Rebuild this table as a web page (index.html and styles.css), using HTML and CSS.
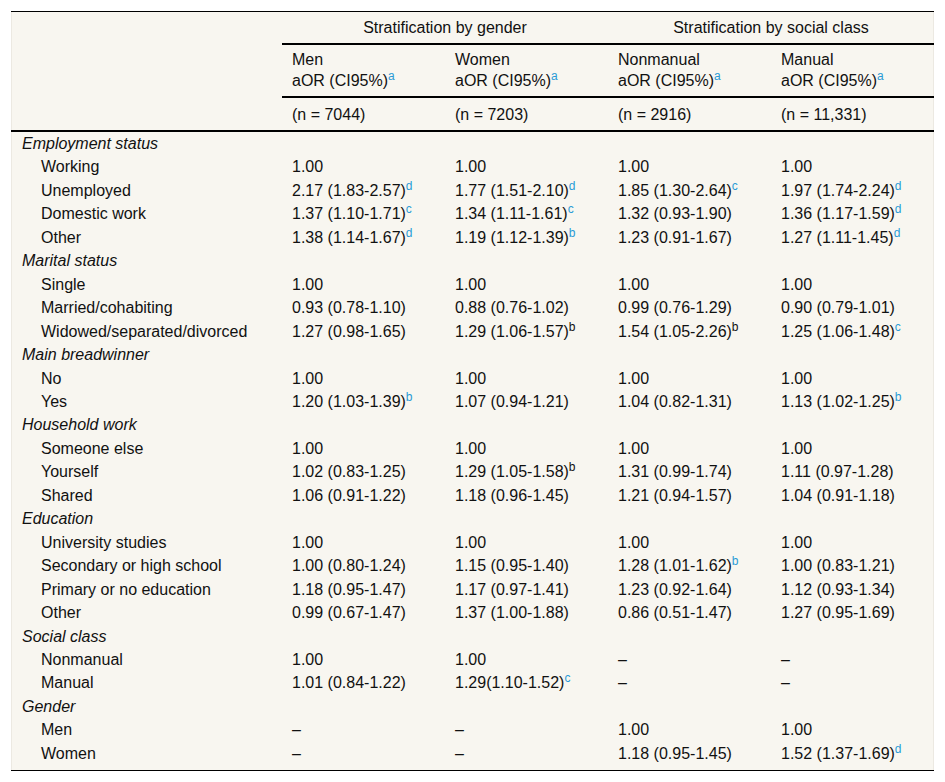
FILE: index.html
```html
<!DOCTYPE html>
<html>
<head>
<meta charset="utf-8">
<link rel="stylesheet" href="styles.css">
</head>
<body>
<div class="wrap">
<table class="tbl">
<colgroup><col class="c-label"><col class="c-data"><col class="c-data"><col class="c-data"><col class="c-data"></colgroup>
<thead>
<tr class="h1">
<th class="corner" rowspan="3"></th>
<th class="group" colspan="2">Stratification by gender</th>
<th class="group" colspan="2">Stratification by social class</th>
</tr>
<tr class="h2">
<th>Men<br>aOR (CI95%)<sup class="fn">a</sup></th>
<th>Women<br>aOR (CI95%)<sup class="fn">a</sup></th>
<th>Nonmanual<br>aOR (CI95%)<sup class="fn">a</sup></th>
<th>Manual<br>aOR (CI95%)<sup class="fn">a</sup></th>
</tr>
<tr class="h3">
<th>(n = 7044)</th>
<th>(n = 7203)</th>
<th>(n = 2916)</th>
<th>(n = 11,331)</th>
</tr>
</thead>
<tbody>
<tr><td class="cat" colspan="5">Employment status</td></tr>
<tr><td class="item">Working</td><td>1.00</td><td>1.00</td><td>1.00</td><td>1.00</td></tr>
<tr><td class="item">Unemployed</td><td>2.17 (1.83-2.57)<sup class="fn">d</sup></td><td>1.77 (1.51-2.10)<sup class="fn">d</sup></td><td>1.85 (1.30-2.64)<sup class="fn">c</sup></td><td>1.97 (1.74-2.24)<sup class="fn">d</sup></td></tr>
<tr><td class="item">Domestic work</td><td>1.37 (1.10-1.71)<sup class="fn">c</sup></td><td>1.34 (1.11-1.61)<sup class="fn">c</sup></td><td>1.32 (0.93-1.90)</td><td>1.36 (1.17-1.59)<sup class="fn">d</sup></td></tr>
<tr><td class="item">Other</td><td>1.38 (1.14-1.67)<sup class="fn">d</sup></td><td>1.19 (1.12-1.39)<sup class="fn">b</sup></td><td>1.23 (0.91-1.67)</td><td>1.27 (1.11-1.45)<sup class="fn">d</sup></td></tr>
<tr><td class="cat" colspan="5">Marital status</td></tr>
<tr><td class="item">Single</td><td>1.00</td><td>1.00</td><td>1.00</td><td>1.00</td></tr>
<tr><td class="item">Married/cohabiting</td><td>0.93 (0.78-1.10)</td><td>0.88 (0.76-1.02)</td><td>0.99 (0.76-1.29)</td><td>0.90 (0.79-1.01)</td></tr>
<tr><td class="item">Widowed/separated/divorced</td><td>1.27 (0.98-1.65)</td><td>1.29 (1.06-1.57)<sup class="plain">b</sup></td><td>1.54 (1.05-2.26)<sup class="plain">b</sup></td><td>1.25 (1.06-1.48)<sup class="fn">c</sup></td></tr>
<tr><td class="cat" colspan="5">Main breadwinner</td></tr>
<tr><td class="item">No</td><td>1.00</td><td>1.00</td><td>1.00</td><td>1.00</td></tr>
<tr><td class="item">Yes</td><td>1.20 (1.03-1.39)<sup class="fn">b</sup></td><td>1.07 (0.94-1.21)</td><td>1.04 (0.82-1.31)</td><td>1.13 (1.02-1.25)<sup class="fn">b</sup></td></tr>
<tr><td class="cat" colspan="5">Household work</td></tr>
<tr><td class="item">Someone else</td><td>1.00</td><td>1.00</td><td>1.00</td><td>1.00</td></tr>
<tr><td class="item">Yourself</td><td>1.02 (0.83-1.25)</td><td>1.29 (1.05-1.58)<sup class="plain">b</sup></td><td>1.31 (0.99-1.74)</td><td>1.11 (0.97-1.28)</td></tr>
<tr><td class="item">Shared</td><td>1.06 (0.91-1.22)</td><td>1.18 (0.96-1.45)</td><td>1.21 (0.94-1.57)</td><td>1.04 (0.91-1.18)</td></tr>
<tr><td class="cat" colspan="5">Education</td></tr>
<tr><td class="item">University studies</td><td>1.00</td><td>1.00</td><td>1.00</td><td>1.00</td></tr>
<tr><td class="item">Secondary or high school</td><td>1.00 (0.80-1.24)</td><td>1.15 (0.95-1.40)</td><td>1.28 (1.01-1.62)<sup class="fn">b</sup></td><td>1.00 (0.83-1.21)</td></tr>
<tr><td class="item">Primary or no education</td><td>1.18 (0.95-1.47)</td><td>1.17 (0.97-1.41)</td><td>1.23 (0.92-1.64)</td><td>1.12 (0.93-1.34)</td></tr>
<tr><td class="item">Other</td><td>0.99 (0.67-1.47)</td><td>1.37 (1.00-1.88)</td><td>0.86 (0.51-1.47)</td><td>1.27 (0.95-1.69)</td></tr>
<tr><td class="cat" colspan="5">Social class</td></tr>
<tr><td class="item">Nonmanual</td><td>1.00</td><td>1.00</td><td>–</td><td>–</td></tr>
<tr><td class="item">Manual</td><td>1.01 (0.84-1.22)</td><td>1.29(1.10-1.52)<sup class="fn">c</sup></td><td>–</td><td>–</td></tr>
<tr><td class="cat" colspan="5">Gender</td></tr>
<tr><td class="item">Men</td><td>–</td><td>–</td><td>1.00</td><td>1.00</td></tr>
<tr><td class="item">Women</td><td>–</td><td>–</td><td>1.18 (0.95-1.45)</td><td>1.52 (1.37-1.69)<sup class="fn">d</sup></td></tr>
</tbody>
</table>
</div>
</body>
</html>
```

FILE: styles.css
```css
html, body {
  background: #ffffff;
}
body {
  margin: 11px 0 0 11px;
  font-family: "Liberation Sans", Arial, Helvetica, sans-serif;
  font-size: 16px;
  color: #111111;
}
.wrap {
  width: 923px;
  box-sizing: border-box;
  background: #f8f6f0;
  border-top: 1px solid #000000;
  border-bottom: 1px solid #000000;
  box-shadow: inset 1px 0 0 #ece9e2, inset -1px 0 0 #ece9e2;
  padding-bottom: 5px;
}
.tbl {
  width: 923px;
  table-layout: fixed;
  border-collapse: separate;
  border-spacing: 0;
}
.c-label { width: 271px; }
.c-data { width: 163px; }
th {
  font-weight: normal;
  text-align: left;
  padding: 0 10px;
  vertical-align: middle;
}
.h1 th {
  height: 31px;
  line-height: 21px;
  padding-top: 0;
  padding-bottom: 0;
  text-align: center;
  border-bottom: 2px solid #000000;
}
.h1 th.corner {
  border-bottom: 2px solid #000000;
}
.h2 th {
  height: 51px;
  line-height: 21px;
  padding-top: 4px;
  padding-bottom: 5px;
  border-bottom: 2px solid #000000;
  box-sizing: border-box;
}
.h3 th {
  height: 32px;
  line-height: 21px;
  border-bottom: 2px solid #000000;
}
td {
  padding: 2px 10px;
  line-height: 19.45px;
  white-space: nowrap;
  vertical-align: middle;
}
td.cat {
  font-style: italic;
  padding-left: 11px;
}
td.item {
  padding-left: 30px;
}
sup {
  font-size: 12px;
  line-height: 0;
  vertical-align: 6px;
}
.fn {
  color: #2a9bd6;
}
.plain {
  color: #111111;
}
```
